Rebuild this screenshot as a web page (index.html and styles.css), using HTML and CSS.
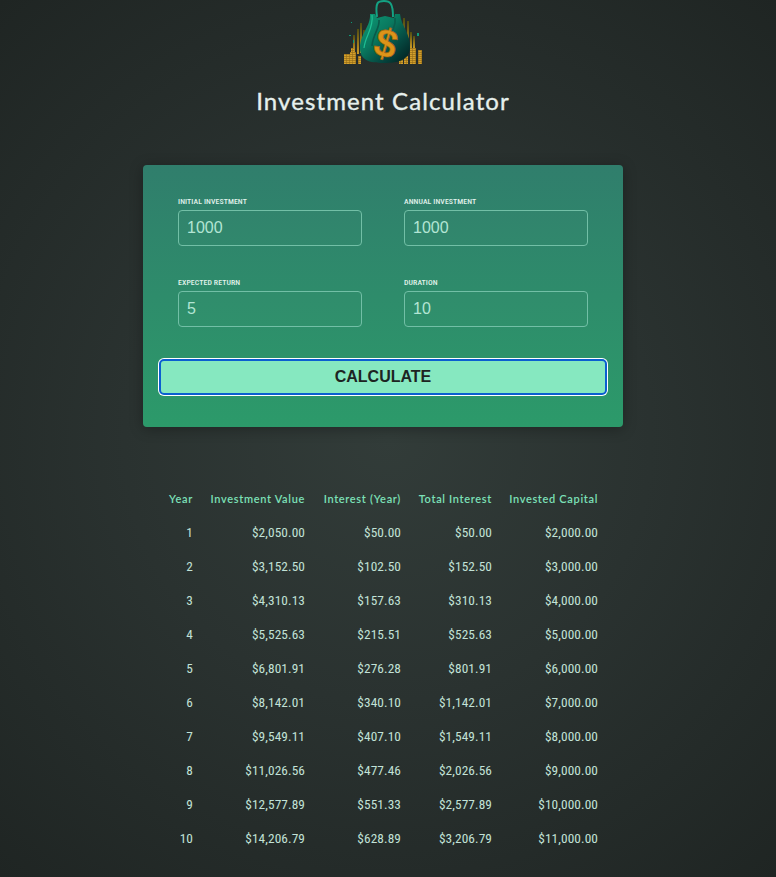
FILE: index.html
```html
<!DOCTYPE html>
<html lang="en">
<head>
<meta charset="utf-8">
<title>Investment Calculator</title>
<link rel="stylesheet" href="styles.css">
</head>
<body>
<div class="page">
<header class="header">
<svg class="logo" width="80" height="66" viewBox="0 0 80 66" aria-hidden="true">
<defs>
<linearGradient id="bag" x1="0" y1="0" x2="1" y2="1"><stop offset="0" stop-color="#0f9c78"/><stop offset=".4" stop-color="#09795f"/><stop offset=".7" stop-color="#05463f"/><stop offset="1" stop-color="#021c1c"/></linearGradient>
<linearGradient id="bar" x1="0" y1="0" x2="0" y2="1"><stop offset="0" stop-color="#4f4c12"/><stop offset=".55" stop-color="#96761a"/><stop offset="1" stop-color="#c99a26"/></linearGradient>
<pattern id="stack" width="3" height="2" patternUnits="userSpaceOnUse"><rect width="3" height="2" fill="#d3a02c"/><rect width="3" height="1" fill="#a97d1e"/><rect width="1" height="2" fill="#8f6818" opacity=".5"/></pattern>
</defs>
<g fill="url(#bar)">
<rect x="10" y="35" width="2" height="18"/><rect x="14" y="29" width="2" height="25"/><rect x="17" y="23" width="2" height="30"/><rect x="20" y="30" width="2" height="22"/>
<rect x="60" y="18" width="2" height="36"/><rect x="64" y="21" width="2" height="30"/><rect x="67" y="32" width="2" height="16"/><rect x="70" y="36" width="2" height="12"/>
</g>
<g fill="url(#stack)">
<rect x="1" y="54" width="6" height="10"/><rect x="7" y="52" width="6" height="12"/><rect x="8" y="48" width="3" height="4"/><rect x="15" y="56" width="3" height="8"/>
<rect x="56" y="59" width="4" height="5"/><rect x="61" y="56" width="4" height="8"/><rect x="67" y="48" width="6" height="16"/><rect x="75" y="50" width="4" height="14"/>
</g>
<path d="M34 17 C32 2 35 1 41 1 C47 1 50 3 50 17" fill="none" stroke="#14a283" stroke-width="2"/>
<path d="M27 14 L32 14 L34 18 L42 16 L51 18 L52 14 L57 14 C58 26 68 34 67 48 C66 60 56 63 41 63 C26 63 17 60 17 48 C17 34 28 26 27 14 Z" fill="url(#bag)"/>
<path d="M29 15 C31 28 22 36 21 48" fill="none" stroke="#1fbf93" stroke-width="1.2"/>
<path d="M36 20 C37 28 30 34 29 46" fill="none" stroke="#0a5a49" stroke-width="1.6"/>
<path d="M52 18 C53 26 50 27 50 30" fill="none" stroke="#0b5d4c" stroke-width="1.6"/>
<g fill="#0d9a76"><rect x="8" y="22" width="1" height="1"/><rect x="6" y="35" width="2" height="1"/><rect x="10" y="40" width="1" height="3"/><rect x="74" y="33" width="2" height="3"/></g>
<text x="43" y="57" class="logo-dollar" transform="rotate(16 43 43)">$</text>
</svg>
<h1 class="title">Investment Calculator</h1>
</header>

<form class="card">
<div class="field-grid">
<label class="field"><span class="field-label">Initial Investment</span><input class="field-input" type="number" value="1000"></label>
<label class="field"><span class="field-label">Annual Investment</span><input class="field-input" type="number" value="1000"></label>
<label class="field"><span class="field-label">Expected Return</span><input class="field-input" type="number" value="5"></label>
<label class="field"><span class="field-label">Duration</span><input class="field-input" type="number" value="10"></label>
</div>
<button class="calc" type="button">CALCULATE</button>
</form>

<table class="results">
<thead>
<tr><th class="c-year">Year</th><th class="c-value">Investment Value</th><th class="c-int">Interest (Year)</th><th class="c-total">Total Interest</th><th class="c-cap">Invested Capital</th></tr>
</thead>
<tbody>
<tr><td>1</td><td>$2,050.00</td><td>$50.00</td><td>$50.00</td><td>$2,000.00</td></tr>
<tr><td>2</td><td>$3,152.50</td><td>$102.50</td><td>$152.50</td><td>$3,000.00</td></tr>
<tr><td>3</td><td>$4,310.13</td><td>$157.63</td><td>$310.13</td><td>$4,000.00</td></tr>
<tr><td>4</td><td>$5,525.63</td><td>$215.51</td><td>$525.63</td><td>$5,000.00</td></tr>
<tr><td>5</td><td>$6,801.91</td><td>$276.28</td><td>$801.91</td><td>$6,000.00</td></tr>
<tr><td>6</td><td>$8,142.01</td><td>$340.10</td><td>$1,142.01</td><td>$7,000.00</td></tr>
<tr><td>7</td><td>$9,549.11</td><td>$407.10</td><td>$1,549.11</td><td>$8,000.00</td></tr>
<tr><td>8</td><td>$11,026.56</td><td>$477.46</td><td>$2,026.56</td><td>$9,000.00</td></tr>
<tr><td>9</td><td>$12,577.89</td><td>$551.33</td><td>$2,577.89</td><td>$10,000.00</td></tr>
<tr><td>10</td><td>$14,206.79</td><td>$628.89</td><td>$3,206.79</td><td>$11,000.00</td></tr>
</tbody>
</table>
</div>
</body>
</html>
```
FILE: styles.css
```css
* { box-sizing: border-box; }
html, body { margin: 0; height: 100%; }
body {
  background: radial-gradient(circle at 50% 50%, #323c39 0%, #2a3230 45%, #1f2523 100%);
  overflow: hidden;
}
.page { width: 766px; font-family: Roboto, sans-serif; }
.header { display: flex; flex-direction: column; align-items: center; }
.logo { display: block; }
.logo-dollar { font: 700 40px "Liberation Sans", sans-serif; fill: #dc9419; stroke: #9c6210; stroke-width: .7; text-anchor: middle; }
.title {
  margin: 20px 0 0;
  font: 400 24px/30px Lato, sans-serif;
  letter-spacing: 1.1px;
  -webkit-text-stroke: .35px currentColor;
  color: #e6f0ec;
}
.card {
  width: 480px;
  height: 262px;
  margin: 49px auto 0;
  padding: 32px 17px;
  border-radius: 4px;
  background: linear-gradient(180deg, #307e6c, #2c9a6a);
  box-shadow: 0 2px 14px rgba(0,0,0,.3);
}
.field-grid {
  display: grid;
  grid-template-columns: 184px 184px;
  column-gap: 42px;
  row-gap: 32px;
  padding-left: 18px;
}
.field { display: block; }
.field-label {
  display: block;
  height: 13px;
  font-size: 7.8px;
  line-height: 9px;
  font-weight: 500;
  font-stretch: 75%;
  letter-spacing: .1px;
  text-transform: uppercase;
  color: #e2f3ec;
}
.field-input {
  display: block;
  width: 184px;
  height: 36px;
  padding: 0 8px 1px;
  border: 1px solid #72bfa6;
  border-radius: 4px;
  background: rgba(255,255,255,.01);
  font: 400 16px "Liberation Sans", sans-serif;
  color: #b3e5d4;
  outline: 0;
  -moz-appearance: textfield;
  appearance: textfield;
}
.calc {
  display: block;
  width: 446px;
  height: 34px;
  margin-top: 33px;
  border: 0;
  border-radius: 4px;
  background: #86e8c0;
  font: 700 16px "Liberation Sans", sans-serif;
  color: #1d2422;
  outline: 2px solid #0b5fd0;
  outline-offset: -1px;
  box-shadow: 0 0 0 2px #fff;
}
.results {
  width: 446px;
  margin: 54px auto 0;
  border-collapse: collapse;
  table-layout: fixed;
}
.results th, .results td { padding: 0 8px; text-align: right; height: 34px; }
.results th { font: 600 11px Lato, sans-serif; letter-spacing: .67px; color: #7ce0b8; white-space: nowrap; }
.results td { padding-top: 1px; font-size: 13.33px; font-stretch: 75%; letter-spacing: .1px; color: #c2e2d7; }
.c-year { width: 41px; }
.c-value { width: 112px; }
.c-int { width: 96px; }
.c-total { width: 91px; }
.c-cap { width: 106px; }
```
